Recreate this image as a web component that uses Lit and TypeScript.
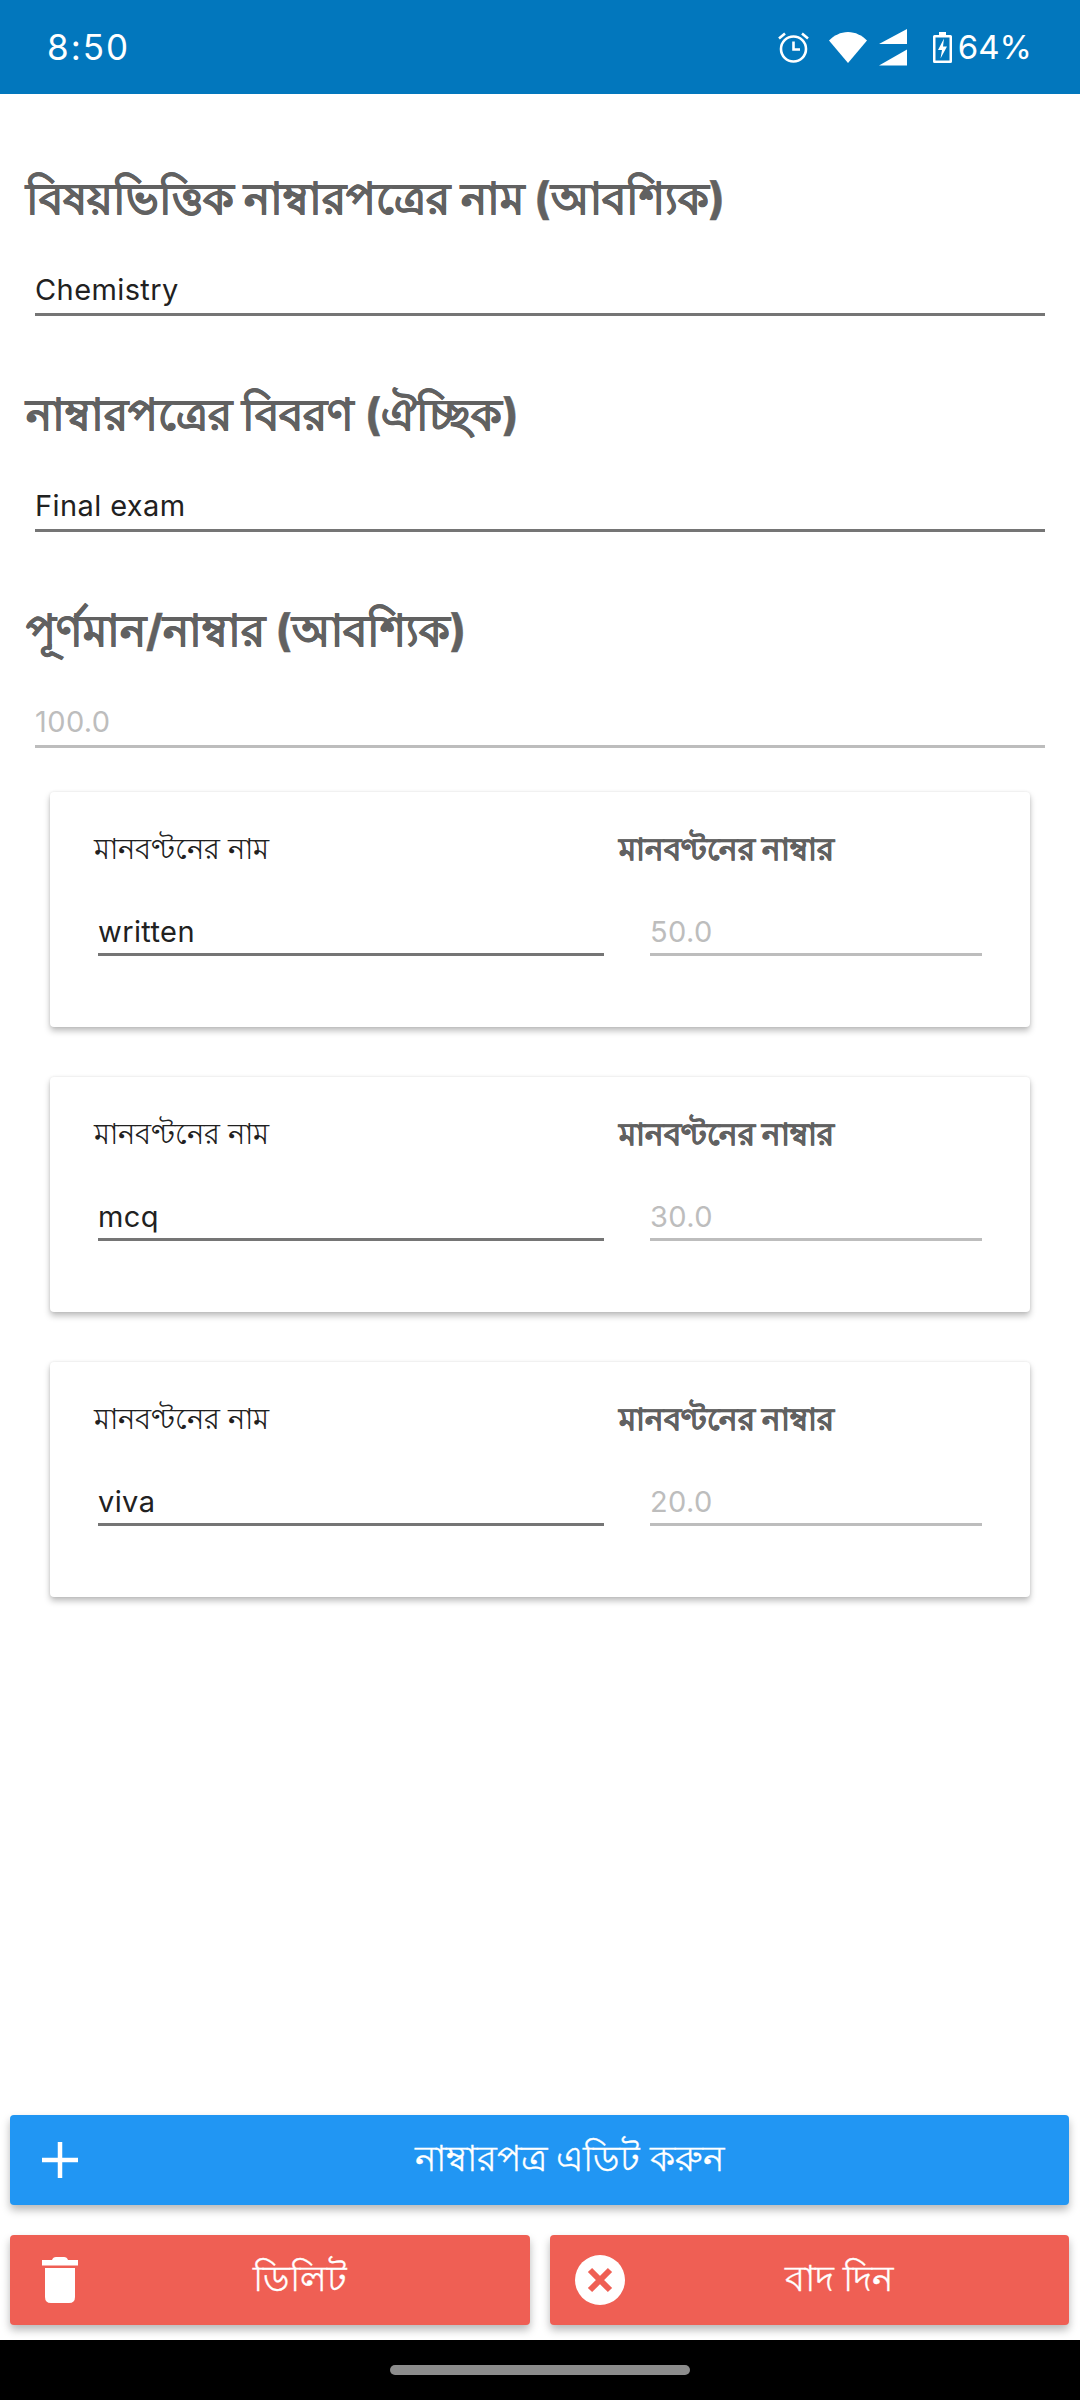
import { LitElement, html, css } from "lit";
import { customElement } from "lit/decorators.js";

@customElement("app-root")
export class AppRoot extends LitElement {
  static styles = css`
    :host { display: block; width: 1080px; height: 2400px; background: #fff; font-family: "Inter", "Noto Sans", sans-serif; overflow: hidden; }
    .page { display: flex; flex-direction: column; height: 2400px; }
    .status { height: 94px; background: #0277bd; color: #fff; display: flex; align-items: center; padding: 0 48px 0 47px; flex: none; font-size: 35px; }
    .status .time { flex: 1; letter-spacing: 2px; }
    .status .icons { display: flex; align-items: center; font-size: 33px; }
    .status svg { display: block; }
    .alarm { margin-right: 20px; }
    .wifi { margin-right: 12px; }
    .signal { margin-right: 26px; }
    .battery { margin-right: 6px; }
    .form { flex: 1; padding: 75px 35px 0 26px; }
    .section { margin-bottom: 69px; }
    .title { font-size: 43.7px; line-height: 60px; font-weight: 700; color: #616161; -webkit-text-stroke: .5px #616161; }
    .input { margin: 41px 0 0 9px; height: 43px; line-height: 40px; font-size: 29px; letter-spacing: .4px; color: #212121; border-bottom: 3px solid #757575; }
    .input.off { color: #bdbdbd; border-color: #bdbdbd; }
    .section.last { margin-bottom: 44px; }
    .card { width: 980px; height: 235px; box-sizing: border-box; margin: 0 0 50px 24px; padding: 37px 48px 0 44px; background: #fff; border-radius: 4px; box-shadow: 0 4px 6px rgba(0,0,0,.25), 0 0 3px rgba(0,0,0,.1); display: grid; grid-template-columns: 510px 364px; column-gap: 14px; }
    .lbl { font-size: 29px; line-height: 40px; color: #212121; }
    .lbl.b { font-size: 30.5px; font-weight: 700; color: #616161; padding-left: 1px; -webkit-text-stroke: .5px #616161; }
    .card .input { margin: 44px 0 0 4px; height: 40px; line-height: 38px; }
    .card .input.off { margin-left: 32px; }
    .btns { display: flex; flex-direction: column; gap: 30px; padding: 0 11px 15px 10px; flex: none; }
    .row { display: flex; gap: 20px; }
    .btn { flex: 1 0 0; height: 90px; border-radius: 4px; color: #fff; display: grid; grid-template-columns: 100px 1fr 40px; align-items: center; font-size: 35.5px; font-weight: 500; box-shadow: 0 5px 8px rgba(0,0,0,.28); }
    .btn.blue { flex: none; }
    .btn .ic { display: flex; justify-content: center; align-items: center; }
    .btn .tx { text-align: center; padding-top: 2px; -webkit-text-stroke: .3px #fff; }
    .blue { background: #2196f3; }
    .red { background: #ef5f54; }
    .nav { height: 60px; background: #000; flex: none; display: flex; justify-content: center; align-items: flex-start; }
    .pill { width: 300px; height: 10px; margin-top: 25px; border-radius: 5px; background: #8c8c8c; }
  `;

  field(t: string, v: string, off = false, last = false) {
    return html`<div class="section ${last ? "last" : ""}">
      <div class="title">${t}</div>
      <div class="input ${off ? "off" : ""}">${v}</div>
    </div>`;
  }

  card(n: string, v: string) {
    return html`<div class="card">
      <div><div class="lbl">মানবণ্টনের নাম</div><div class="input">${n}</div></div>
      <div><div class="lbl b">মানবণ্টনের নাম্বার</div><div class="input off">${v}</div></div>
    </div>`;
  }

  render() {
    return html`<div class="page">
      <div class="status">
        <div class="time">8:50</div>
        <div class="icons">
          <svg class="alarm" width="31" height="32" viewBox="0 0 31 32" fill="none" stroke="#fff" stroke-width="2.6">
            <circle cx="15.5" cy="18" r="12.5"/>
            <path d="M15.5 10.5V18.5H22"/>
            <path d="M1 7.5L7 2.5M30 7.5L24 2.5"/>
          </svg>
          <svg class="wifi" width="38" height="31" viewBox="0 0 38 31"><path fill="#fff" d="M0 8.5C5 3.5 11.5 0 19 0S33 3.500 38 8.500L19 31Z"/></svg>
          <svg class="signal" width="28" height="37" viewBox="0 0 28 37"><path fill="#fff" d="M0 15L28 0V15ZM0 36.500L28 20.500V36.500Z"/></svg>
          <svg class="battery" width="19" height="31" viewBox="0 0 19 31">
            <path fill="#fff" fill-rule="evenodd" d="M6 0H13V3H17.500Q19 3 19 4.500V29.500Q19 31 17.500 31H1.500Q0 31 0 29.500V4.500Q0 3 1.500 3H6ZM2.500 5.500V28.500H16.500V5.500Z"/>
            <path fill="#fff" d="M11 6.500L5 18H9L7.500 26.500L14 14.500H10Z"/>
          </svg>
          <span>64%</span>
        </div>
      </div>
      <div class="form">
        ${this.field("বিষয়ভিত্তিক নাম্বারপত্রের নাম (আবশ্যিক)", "Chemistry")}
        ${this.field("নাম্বারপত্রের বিবরণ (ঐচ্ছিক)", "Final exam")}
        ${this.field("পূর্ণমান/নাম্বার (আবশ্যিক)", "100.0", true, true)}
        ${this.card("written", "50.0")}
        ${this.card("mcq", "30.0")}
        ${this.card("viva", "20.0")}
      </div>
      <div class="btns">
        <div class="btn blue">
          <div class="ic"><svg width="36" height="36" viewBox="0 0 36 36"><path fill="#fff" d="M15.750 0H20.250V15.750H36V20.250H20.250V36H15.750V20.250H0V15.750H15.750Z"/></svg></div>
          <div class="tx">নাম্বারপত্র এডিট করুন</div><div></div>
        </div>
        <div class="row">
          <div class="btn red">
            <div class="ic"><svg width="36" height="46" viewBox="0 0 36 46"><path fill="#fff" d="M10 3Q11 0 14 0H22Q25 0 26 3H36V8.500H0V3ZM3 11H33V40Q33 46 27 46H9Q3 46 3 40Z"/></svg></div>
            <div class="tx">ডিলিট</div><div></div>
          </div>
          <div class="btn red">
            <div class="ic"><svg width="50" height="50" viewBox="0 0 50 50"><circle cx="25" cy="25" r="25" fill="#fff"/><path d="M15 15L35 35M35 15L15 35" stroke="#ef5f54" stroke-width="6"/></svg></div>
            <div class="tx">বাদ দিন</div><div></div>
          </div>
        </div>
      </div>
      <div class="nav"><div class="pill"></div></div>
    </div>`;
  }
}
